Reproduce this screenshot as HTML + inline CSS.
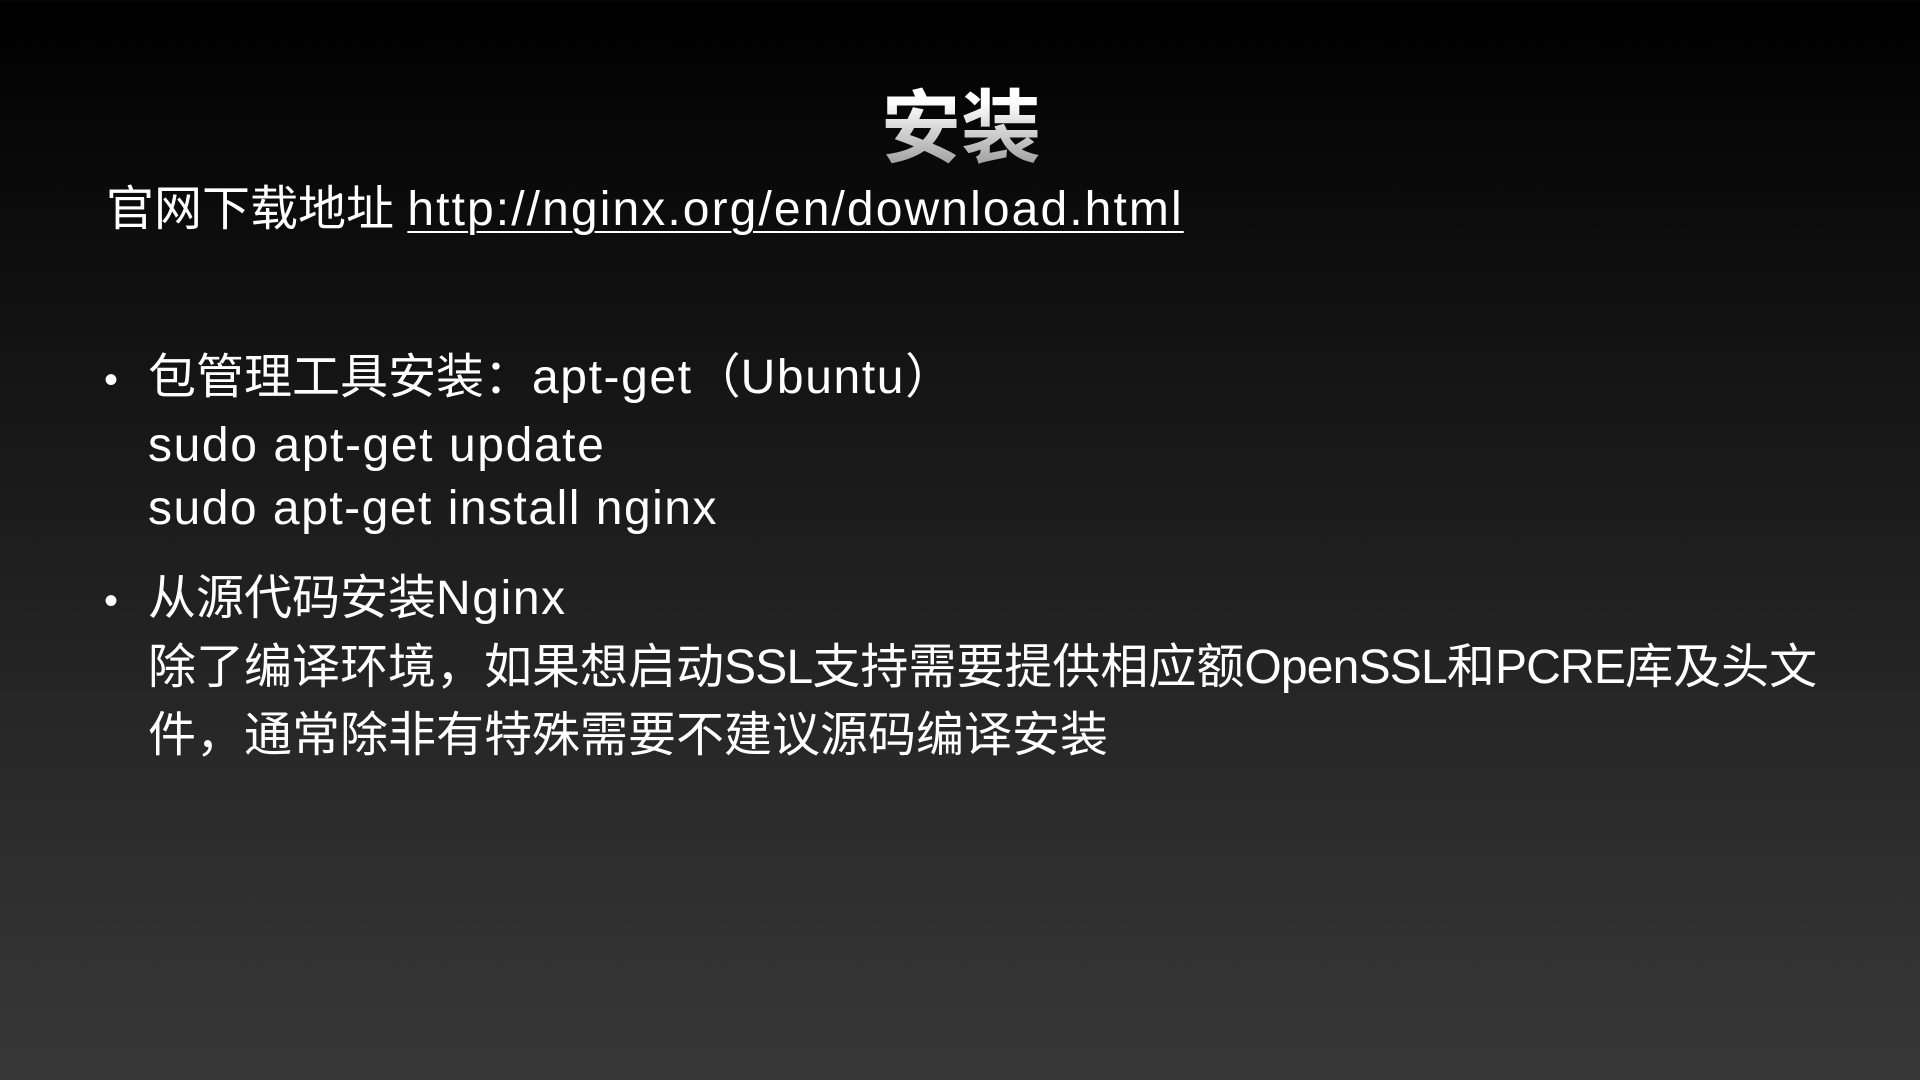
<!DOCTYPE html>
<html><head><meta charset="utf-8"><style>
html,body{margin:0;padding:0}
body{width:1920px;height:1080px;overflow:hidden;position:relative;background:linear-gradient(to bottom,#000 0%,#121212 30%,#262626 65%,#383838 100%);font-family:"Liberation Sans","Noto Sans CJK SC",sans-serif;color:#fff}
.l{position:absolute;white-space:nowrap;font-size:48px;line-height:48px}
.e{letter-spacing:1.6px}
.n{letter-spacing:-0.8px}
.t{position:absolute;left:0;width:1922px;text-align:center;top:84px;font-size:80px;line-height:90px;font-weight:bold;color:#ccc;background:linear-gradient(to bottom,#fff 20%,#999 95%);-webkit-background-clip:text;background-clip:text;-webkit-text-fill-color:transparent}
.b{position:absolute;left:104px;font-size:40px;line-height:48px}
a{color:#fff;text-decoration:underline;text-decoration-thickness:2px;text-underline-offset:6px;letter-spacing:2.1px}
</style></head><body>
<div class="t">安装</div>
<div class="l" style="left:106px;top:186px">官网下载地址 <a>http://nginx.org/en/download.html</a></div>
<div class="b" style="top:356px">•</div>
<div class="l" style="left:148px;top:354px">包管理工具安装：<span class="e">apt-get</span>（<span class="e">Ubuntu</span>）</div>
<div class="l e" style="left:148px;top:422px">sudo apt-get update</div>
<div class="l" style="left:148px;top:485px;letter-spacing:1.5px">sudo apt-get install nginx</div>
<div class="b" style="top:577px">•</div>
<div class="l" style="left:148px;top:575px">从源代码安装<span class="e">Nginx</span></div>
<div class="l" style="left:148px;top:644px">除了编译环境，如果想启动<span class="n">SSL</span>支持需要提供相应额<span class="n">OpenSSL</span>和<span class="n">PCRE</span>库及头文</div>
<div class="l" style="left:148px;top:712px">件，通常除非有特殊需要不建议源码编译安装</div>
</body></html>
